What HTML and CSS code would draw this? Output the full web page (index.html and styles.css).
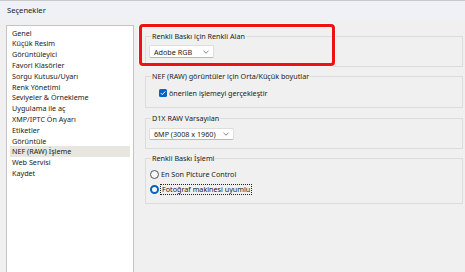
FILE: index.html
```html
<!DOCTYPE html>
<html lang="tr">
<head>
    <meta charset="UTF-8">
    <title>Seçenekler</title>
    <link rel="stylesheet" href="styles.css">
</head>
<body>
    <div class="window">
        <div class="titlebar">Seçenekler</div>

        <div class="main">
            <ul class="nav">
                <li>Genel</li>
                <li>Küçük Resim</li>
                <li>Görüntüleyici</li>
                <li>Favori Klasörler</li>
                <li>Sorgu Kutusu/Uyarı</li>
                <li>Renk Yönetimi</li>
                <li>Seviyeler &amp; Örnekleme</li>
                <li>Uygulama ile aç</li>
                <li>XMP/IPTC Ön Ayarı</li>
                <li>Etiketler</li>
                <li>Görüntüle</li>
                <li class="active">NEF (RAW) İşleme</li>
                <li>Web Servisi</li>
                <li>Kaydet</li>
            </ul>

            <div class="panel">
                <fieldset class="group group-color-space">
                    <legend>Renkli Baskı için Renkli Alan</legend>
                    <div class="select select-rgb">
                        <span>Adobe RGB</span>
                        <svg class="chevron" width="6" height="4" viewBox="0 0 6 4"><path d="M0.5 0.8 L3 3.2 L5.5 0.8" fill="none" stroke="#666" stroke-width="0.8"/></svg>
                    </div>
                </fieldset>

                <fieldset class="group group-size">
                    <legend>NEF (RAW) görüntüler için Orta/Küçük boyutlar</legend>
                    <label class="check-row">
                        <span class="checkbox">
                            <svg width="8" height="8" viewBox="0 0 8 8"><path d="M1.8 4.1 L3.3 5.6 L6.3 2.4" fill="none" stroke="#fff" stroke-width="1"/></svg>
                        </span>
                        önerilen işlemeyi gerçekleştir
                    </label>
                </fieldset>

                <fieldset class="group group-default">
                    <legend>D1X RAW Varsayılan</legend>
                    <div class="select select-size">
                        <span>6MP (3008 x 1960)</span>
                        <svg class="chevron" width="6" height="4" viewBox="0 0 6 4"><path d="M0.5 0.8 L3 3.2 L5.5 0.8" fill="none" stroke="#666" stroke-width="0.8"/></svg>
                    </div>
                </fieldset>

                <fieldset class="group group-print">
                    <legend>Renkli Baskı İşlemi</legend>
                    <label class="radio-row">
                        <span class="radio"></span>
                        En Son Picture Control
                    </label>
                    <label class="radio-row">
                        <span class="radio checked"></span>
                        <span class="focus">Fotoğraf makinesi uyumlu</span>
                    </label>
                </fieldset>

                <div class="highlight"></div>
            </div>
        </div>
    </div>
</body>
</html>
```

FILE: styles.css
```css
* {
    margin: 0;
    padding: 0;
    box-sizing: border-box;
}

body {
    width: 465px;
    height: 272px;
    overflow: hidden;
    background-color: #f0f0f0;
    color: #1b1b1b;
    font-family: "Noto Sans", "DejaVu Sans", sans-serif;
    font-size: 7.2px;
}

.window {
    height: 272px;
    display: flex;
    flex-direction: column;
}

.titlebar {
    height: 20px;
    line-height: 19px;
    padding-left: 7px;
    background-color: #eff1f6;
    border-top: 1px solid #c9c9cc;
    font-size: 7.6px;
}

.main {
    flex: 1;
    display: flex;
    align-items: flex-start;
}

/* left menu */
.nav {
    list-style: none;
    width: 128px;
    height: 260px;
    margin: 5px 0 0 6px;
    padding: 1.6px 3px 0 3px;
    background-color: #fff;
    border: 1px solid #c3c3ca;
    border-left-width: 1.5px;
    border-right-width: 1.5px;
}

.nav li {
    height: 10.8px;
    line-height: 10.8px;
    padding-left: 2px;
    white-space: nowrap;
}

.nav li.active {
    background-color: #e7e7df;
}

/* right panel */
.panel {
    position: relative;
    flex: 1;
    display: flex;
    flex-direction: column;
    gap: 3px;
    margin: 10px 2px 0 11px;
}

.group {
    border: 1px solid #dcdcdc;
    padding: 3px 4px 8px 3px;
    min-width: 0;
}

.group legend {
    margin-left: 2px;
    padding: 0 1px;
    line-height: 12px;
    color: #1b1b1b;
}

.group-size {
    padding-top: 5px;
}

.group-default {
    padding-top: 4px;
    margin-top: 1px;
}

.group-print {
    padding-top: 1px;
}

.select {
    display: flex;
    align-items: center;
    justify-content: space-between;
    height: 13px;
    padding: 0 4px 0 4px;
    background-color: #fff;
    border: 1px solid #dedede;
    border-bottom-color: #b9b9b9;
    border-radius: 2px;
}

.select-rgb {
    width: 65px;
}

.select-size {
    width: 85px;
    height: 12px;
}

.chevron {
    display: block;
}

.check-row,
.radio-row {
    display: flex;
    align-items: center;
    height: 12px;
    white-space: nowrap;
}

.check-row {
    margin-left: 10px;
}

.checkbox {
    width: 8px;
    height: 8px;
    margin-right: 2px;
    border-radius: 1.5px;
    background-color: #0064c3;
    display: flex;
}

.radio-row {
    margin-top: 3px;
    margin-left: 1px;
}

.radio {
    width: 9px;
    height: 9px;
    margin-right: 2px;
    border-radius: 50%;
    border: 1px solid #555;
    background-color: #f7f7f7;
    flex-shrink: 0;
}

.radio.checked {
    border: 2.6px solid #0064c3;
    background-color: #fff;
}

.focus {
    padding: 0 1px;
    line-height: 9px;
    outline: 1px dotted #222;
}

/* red annotation frame */
.highlight {
    position: absolute;
    left: -6px;
    top: -6px;
    width: 196px;
    height: 42px;
    border: 3px solid #ee1111;
    border-radius: 4px;
    box-shadow: 0 0 0 1px rgba(255, 255, 255, 0.8);
}
```
